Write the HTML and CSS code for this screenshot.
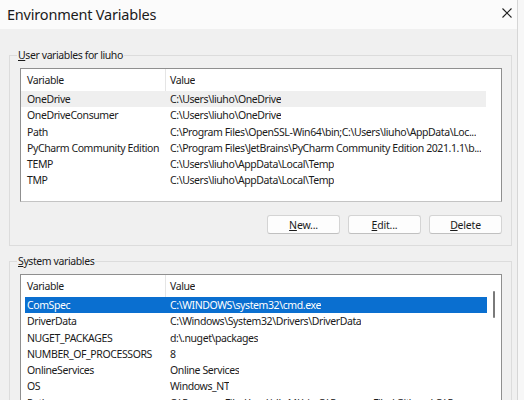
FILE: index.html
```html
<!DOCTYPE html>
<html>
<head>
<meta charset="utf-8">
<link rel="stylesheet" href="styles.css">
</head>
<body>
<div class="window">
  <div class="titlebar">
    <span class="title">Environment Variables</span>
    <svg class="close" width="10" height="10" viewBox="0 0 10 10"><path d="M0.5 0.5 L9.5 9.5 M9.5 0.5 L0.5 9.5" stroke="#222" stroke-width="1.1" fill="none"/></svg>
  </div>
  <div class="content">
    <fieldset class="group user">
      <legend><u>U</u>ser variables for liuho</legend>
      <div class="list user-list">
        <div class="row head"><span class="c1">Variable</span><span class="c2">Value</span></div>
        <div class="row hover"><span class="c1">OneDrive</span><span class="c2">C:\Users\liuho\OneDrive</span></div>
        <div class="row"><span class="c1">OneDriveConsumer</span><span class="c2">C:\Users\liuho\OneDrive</span></div>
        <div class="row"><span class="c1">Path</span><span class="c2">C:\Program Files\OpenSSL-Win64\bin;C:\Users\liuho\AppData\Loc...</span></div>
        <div class="row"><span class="c1">PyCharm Community Edition</span><span class="c2">C:\Program Files\JetBrains\PyCharm Community Edition 2021.1.1\b...</span></div>
        <div class="row"><span class="c1">TEMP</span><span class="c2">C:\Users\liuho\AppData\Local\Temp</span></div>
        <div class="row"><span class="c1">TMP</span><span class="c2">C:\Users\liuho\AppData\Local\Temp</span></div>
      </div>
      <div class="buttons">
        <button class="btn"><u>N</u>ew...</button>
        <button class="btn"><u>E</u>dit...</button>
        <button class="btn"><u>D</u>elete</button>
      </div>
    </fieldset>
    <fieldset class="group system">
      <legend><u>S</u>ystem variables</legend>
      <div class="list sys-list">
        <div class="rows">
          <div class="row head"><span class="c1">Variable</span><span class="c2">Value</span></div>
          <div class="row selected"><span class="c1">ComSpec</span><span class="c2">C:\WINDOWS\system32\cmd.exe</span></div>
          <div class="row"><span class="c1">DriverData</span><span class="c2">C:\Windows\System32\Drivers\DriverData</span></div>
          <div class="row"><span class="c1">NUGET_PACKAGES</span><span class="c2">d:\.nuget\packages</span></div>
          <div class="row"><span class="c1">NUMBER_OF_PROCESSORS</span><span class="c2">8</span></div>
          <div class="row"><span class="c1">OnlineServices</span><span class="c2">Online Services</span></div>
          <div class="row"><span class="c1">OS</span><span class="c2">Windows_NT</span></div>
          <div class="row"><span class="c1">Path</span><span class="c2">C:\Program Files\Java\jdk-11\bin;C:\Program Files\Git\cmd;C:\P...</span></div>
        </div>
        <div class="scroll"><div class="thumb"></div></div>
      </div>
    </fieldset>
  </div>
</div>
</body>
</html>
```
FILE: styles.css
```css
html, body {
  margin: 0;
  padding: 0;
  height: 400px;
  overflow: hidden;
  background: #f7f7f7;
}
body {
  font-family: "Noto Sans", "Open Sans", sans-serif;
  font-size: 10.5px;
  letter-spacing: -0.4px;
  color: #1b1b1b;
}
.window {
  width: 517px;
  height: 400px;
  background: #f0f0f0;
  border-right: 1px solid #d6d6d6;
  overflow: hidden;
}
.titlebar {
  height: 29px;
  background: #fbfbfb;
  display: flex;
  align-items: center;
  justify-content: space-between;
  padding: 0 5px 0 7px;
}
.title {
  font-size: 14.5px;
  letter-spacing: -0.2px;
  color: #1a1a1a;
  margin-top: -2px;
}
.close {
  margin-top: -3px;
}
.content {
  padding: 18px 5px 0 9px;
  display: flex;
  flex-direction: column;
  gap: 7px;
}
.group {
  margin: 0;
  border: 1px solid #dcdcdc;
  padding: 5px 9px 11px 10px;
  min-width: 0;
}
.group legend {
  padding: 0 1px;
  margin-left: -3px;
  line-height: 16px;
  color: #1b1b1b;
}
.list {
  background: #fff;
  border: 1px solid #8f8f8f;
  border-bottom-color: #c4c4c4;
}
.user-list {
  height: 132px;
}
.row {
  display: flex;
  height: 16.3px;
  line-height: 16px;
  margin-right: 15px;
  white-space: nowrap;
}
.row.head {
  height: 22px;
  line-height: 22px;
  margin-right: 0;
}
.c1 {
  box-sizing: border-box;
  width: 145px;
  padding-left: 6px;
  flex: none;
  overflow: hidden;
}
.head .c1 {
  border-right: 1px solid #e5e5e5;
}
.c2 {
  padding-left: 4px;
  overflow: hidden;
}
.row.hover {
  background: #efefef;
}
.row.selected {
  background: #0a6fd0;
  color: #fff;
}
.buttons {
  display: flex;
  justify-content: flex-end;
  gap: 8px;
  margin-top: 13px;
}
.btn {
  width: 73px;
  height: 19px;
  font-family: inherit;
  font-size: inherit;
  letter-spacing: -0.2px;
  color: #1b1b1b;
  background: #fdfdfd;
  border: 1px solid #d4d4d4;
  border-bottom-color: #c0c0c0;
  border-radius: 3px;
  padding: 0;
  line-height: 16px;
}
.sys-list {
  display: flex;
  height: 200px;
}
.rows {
  flex: 1;
  min-width: 0;
}
.sys-list .row {
  margin-right: 0;
}
.sys-list .row.head {
  margin-right: -14px;
}
.sys-list .row:not(.head) {
  margin-left: 4px;
}
.sys-list .row:not(.head) .c1 {
  width: 141px;
  padding-left: 2px;
}
.scroll {
  width: 14px;
  flex: none;
  padding-top: 16px;
  display: flex;
  justify-content: center;
}
.thumb {
  width: 2px;
  height: 27px;
  background: #7a7a7a;
  border-radius: 1px;
}
```
